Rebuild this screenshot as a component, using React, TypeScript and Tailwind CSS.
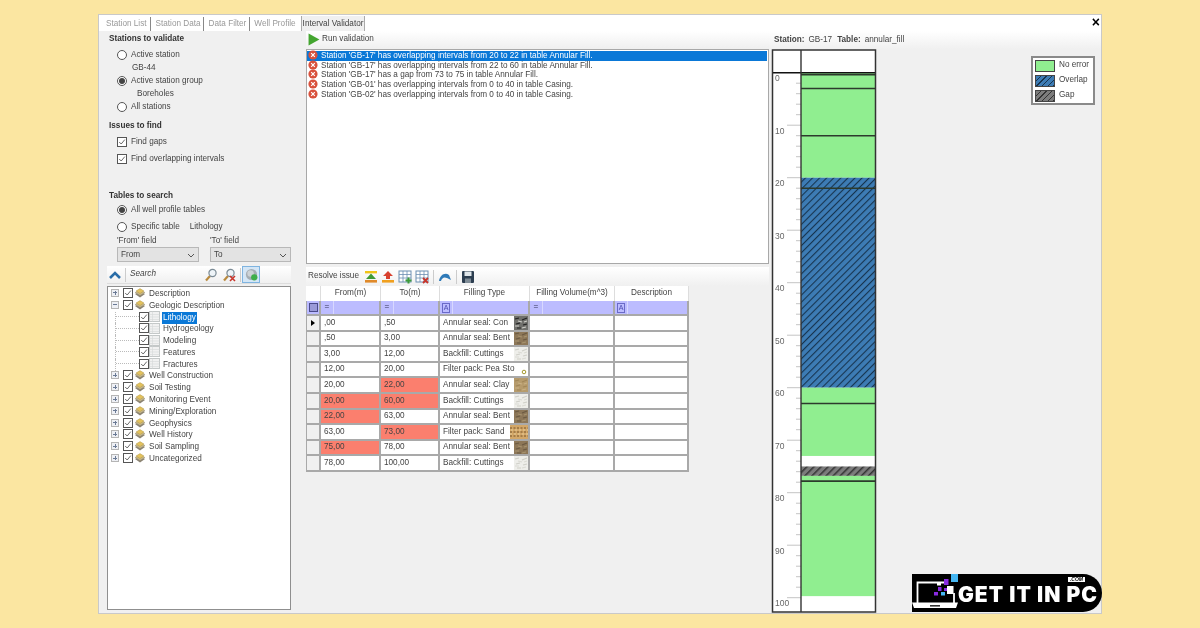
import type { ReactNode } from "react";

const grid = [
  { from: ",00", to: ",50", type: "Annular seal: Con", tex: "con", arrow: true },
  { from: ",50", to: "3,00", type: "Annular seal: Bent", tex: "bent" },
  { from: "3,00", to: "12,00", type: "Backfill: Cuttings", tex: "cut" },
  { from: "12,00", to: "20,00", type: "Filter pack: Pea Sto", tex: "pea" },
  { from: "20,00", to: "22,00", type: "Annular seal: Clay", tex: "clay", badTo: true },
  { from: "20,00", to: "60,00", type: "Backfill: Cuttings", tex: "cut", badFrom: true, badTo: true },
  { from: "22,00", to: "63,00", type: "Annular seal: Bent", tex: "bent", badFrom: true },
  { from: "63,00", to: "73,00", type: "Filter pack: Sand", tex: "sand", badTo: true },
  { from: "75,00", to: "78,00", type: "Annular seal: Bent", tex: "bent", badFrom: true },
  { from: "78,00", to: "100,00", type: "Backfill: Cuttings", tex: "cut" },
];

const messages = [
  "Station 'GB-17' has overlapping intervals from 20 to 22 in table Annular Fill.",
  "Station 'GB-17' has overlapping intervals from 22 to 60 in table Annular Fill.",
  "Station 'GB-17' has a gap from 73 to 75 in table Annular Fill.",
  "Station 'GB-01' has overlapping intervals from 0 to 40 in table Casing.",
  "Station 'GB-02' has overlapping intervals from 0 to 40 in table Casing.",
];

const treeAfter = [
  "Well Construction",
  "Soil Testing",
  "Monitoring Event",
  "Mining/Exploration",
  "Geophysics",
  "Well History",
  "Soil Sampling",
  "Uncategorized",
];

function Radio({ on }: { on?: boolean }) {
  return (
    <span className="mb-[2px] flex h-[10px] w-[10px] shrink-0 items-center justify-center rounded-full border border-[#555] bg-white">
      {on && <span className="h-[6px] w-[6px] rounded-full bg-[#444]" />}
    </span>
  );
}

function Check() {
  return (
    <span className="mb-[2px] flex h-[10px] w-[10px] shrink-0 items-center justify-center border border-[#555] bg-white">
      <svg viewBox="0 0 10 10" className="h-full w-full">
        <path d="M1.5 5 L4 7.5 L8.5 2" fill="none" stroke="#444" strokeWidth="1" />
      </svg>
    </span>
  );
}

function Expander({ open }: { open?: boolean }) {
  return (
    <span className="relative mb-[2px] flex h-[8px] w-[8px] shrink-0 items-center justify-center border border-[#b5b5b5] bg-[#eef0f5]">
      <span className="h-px w-[4px] bg-[#6a7a95]" />
      {!open && <span className="absolute h-[4px] w-px bg-[#6a7a95]" />}
    </span>
  );
}

function Stack() {
  return (
    <svg viewBox="0 0 12 10" className="mb-[2px] h-[10px] w-[12px] shrink-0">
      <path d="M1 6 L6 3.5 L11 6 L6 9.5 Z" fill="#8b8372" />
      <path d="M1 4.5 L6 2 L11 4.5 L6 7.5 Z" fill="#c9b98a" stroke="#8b8372" strokeWidth=".4" />
      <path d="M2 3 L6 .6 L10 3 L6 5.5 Z" fill="#e3c25e" stroke="#a98d3c" strokeWidth=".4" />
    </svg>
  );
}

function TableIcon() {
  return (
    <svg viewBox="0 0 11 11" className="mb-[2px] h-[11px] w-[11px] shrink-0">
      <rect x=".5" y=".5" width="10" height="10" fill="#f1f1f1" stroke="#c4c8c8" />
      <path d="M.5 3.5 H10.5 M.5 6 H10.5 M.5 8.5 H10.5 M3.5 .5 V10.5" stroke="#d5d8d8" strokeWidth=".6" />
    </svg>
  );
}

function ErrorDot() {
  return (
    <svg viewBox="0 0 10 10" className="mb-[1px] h-[10px] w-[10px] shrink-0">
      <circle cx="5" cy="5" r="4.6" fill="#d9513c" />
      <path d="M3.2 3.2 L6.8 6.8 M6.8 3.2 L3.2 6.8" stroke="#fff" strokeWidth="1.2" />
    </svg>
  );
}

function Option({ on, radio = true, children }: { on?: boolean; radio?: boolean; children: ReactNode }) {
  return (
    <div className="flex h-[13px] items-center gap-[4px] pl-[18px]">
      {radio ? <Radio on={on} /> : <Check />}
      <span>{children}</span>
    </div>
  );
}

function Heading({ children }: { children: ReactNode }) {
  return <div className="flex h-[13px] items-center pl-[10px] font-bold text-[#333]">{children}</div>;
}

function Select({ label, w }: { label: string; w: string }) {
  return (
    <div className={`flex h-[15px] items-center justify-between border border-[#b8b8b8] bg-[#e3e3e3] pt-[2px] pr-[3px] pl-[3px] ${w}`}>
      <span>{label}</span>
      <svg viewBox="0 0 8 5" className="h-[5px] w-[8px]">
        <path d="M1 1 L4 4 L7 1" fill="none" stroke="#555" />
      </svg>
    </div>
  );
}

function Magnifier({ cross }: { cross?: boolean }) {
  return (
    <svg viewBox="0 0 14 14" className="h-[14px] w-[14px] shrink-0">
      <path d="M6 8 L2 12.5" stroke="#b98a3e" strokeWidth="2.2" />
      <circle cx="8.5" cy="5" r="3.6" fill="#eef4f8" stroke="#7b8b95" strokeWidth="1.2" />
      {cross && <path d="M8 8 L13 13 M13 8 L8 13" stroke="#c8352b" strokeWidth="1.6" />}
    </svg>
  );
}

function StationTree() {
  return (
    <div className="mt-[2px] mr-[15px] ml-[8px] min-h-0 flex-1 border border-[#8f8f8f] bg-white pt-[1px]">
      <TreeRoot label="Description" />
      <TreeRoot label="Geologic Description" open />
      <TreeLeaf label="Lithology" selected />
      <TreeLeaf label="Hydrogeology" />
      <TreeLeaf label="Modeling" />
      <TreeLeaf label="Features" />
      <TreeLeaf label="Fractures" />
      {treeAfter.map((t) => (
        <TreeRoot key={t} label={t} />
      ))}
    </div>
  );
}

function TreeRoot({ label, open }: { label: string; open?: boolean }) {
  return (
    <div className="flex h-[11.8px] items-center pl-[3px]">
      <Expander open={open} />
      <span className="ml-[4px] flex items-center">
        <Check />
      </span>
      <span className="ml-px flex items-center">
        <Stack />
      </span>
      <span className="ml-[3px]">{label}</span>
    </div>
  );
}

function TreeLeaf({ label, selected }: { label: string; selected?: boolean }) {
  return (
    <div className="ml-[7px] flex h-[11.8px] items-center border-l border-dotted border-[#bbb]">
      <span className="mb-[2px] w-[23px] border-t border-dotted border-[#bbb]" />
      <Check />
      <TableIcon />
      <span className={`ml-[2px] px-px leading-[12px] ${selected ? "bg-[#0a78d7] text-white" : ""}`}>{label}</span>
    </div>
  );
}

function LeftPanel() {
  return (
    <div className="flex h-full w-[207px] shrink-0 flex-col pt-[1px]">
      <div className="pt-[1px]">
        <Heading>Stations to validate</Heading>
      </div>
      <div className="mt-[3px]">
        <Option>Active station</Option>
      </div>
      <div className="flex h-[13px] items-center pl-[33px]">GB-44</div>
      <Option on>Active station group</Option>
      <div className="flex h-[13px] items-center pl-[38px]">Boreholes</div>
      <Option>All stations</Option>
      <div className="mt-[6px]">
        <Heading>Issues to find</Heading>
      </div>
      <div className="mt-[3px]">
        <Option radio={false}>Find gaps</Option>
      </div>
      <div className="mt-[4px]">
        <Option radio={false}>Find overlapping intervals</Option>
      </div>
      <div className="mt-[24px]">
        <Heading>Tables to search</Heading>
      </div>
      <div className="mt-[1px]">
        <Option on>All well profile tables</Option>
      </div>
      <div className="mt-[4px] flex items-center">
        <Option>Specific table</Option>
        <span className="ml-[10px]">Lithology</span>
      </div>
      <div className="mt-[2px] flex h-[11px] items-center pl-[18px]">
        <span className="w-[93px]">'From' field</span>
        <span>'To' field</span>
      </div>
      <div className="flex gap-[11px] pl-[18px]">
        <Select label="From" w="w-[82px]" />
        <Select label="To" w="w-[81px]" />
      </div>
      <div className="mt-[4px] mr-[15px] ml-[8px] flex h-[18px] items-center border-b border-[#ddd] bg-gradient-to-b from-white to-[#f0f0f0] pl-[2px]">
        <svg viewBox="0 0 12 8" className="h-[8px] w-[12px] shrink-0">
          <path d="M1 7 L6 2 L11 7" fill="none" stroke="#2a6da8" strokeWidth="2.6" />
        </svg>
        <span className="ml-[4px] h-[14px] w-px bg-[#ccc]" />
        <span className="ml-[4px] w-[74px] italic">Search</span>
        <Magnifier />
        <span className="ml-[4px] flex items-center">
          <Magnifier cross />
        </span>
        <span className="ml-[4px] h-[14px] w-px bg-[#ccc]" />
        <span className="ml-[1px] flex h-[17px] w-[18px] items-center justify-center border border-[#7fb4e0] bg-[#d4e6f6]">
          <svg viewBox="0 0 14 14" className="h-[13px] w-[13px]">
            <circle cx="7" cy="7" r="6" fill="#a5adb3" />
            <circle cx="6" cy="6" r="3.5" fill="#cdd2d6" />
            <circle cx="10" cy="10" r="3.4" fill="#3fae49" />
          </svg>
        </span>
      </div>
      <StationTree />
      <div className="h-[3px]" />
    </div>
  );
}

function Toolbar({ children, className = "" }: { children: ReactNode; className?: string }) {
  return (
    <div className={`flex items-center bg-gradient-to-b from-white to-[#f0f0f0] ${className}`}>{children}</div>
  );
}

function ResolveIcons() {
  return (
    <div className="ml-[5px] flex items-center gap-[3px]">
      <svg viewBox="0 0 14 14" className="h-[14px] w-[14px]">
        <rect x="1" y="1" width="12" height="2.4" fill="#f0c419" />
        <path d="M7 3.5 L12 9 H2 Z" fill="#3f9a36" />
        <rect x="1" y="10" width="12" height="2.6" fill="#e08a2a" />
      </svg>
      <svg viewBox="0 0 14 14" className="h-[14px] w-[14px]">
        <path d="M7 1 L12 6 H9 V9 H5 V6 H2 Z" fill="#d8402e" />
        <rect x="1" y="10" width="12" height="2.6" fill="#f0a01f" />
      </svg>
      <svg viewBox="0 0 14 14" className="h-[14px] w-[14px]">
        <rect x="1" y="1" width="12" height="11" fill="#fff" stroke="#6d8fb2" />
        <path d="M1 4.5 H13 M1 8 H13 M5 1 V12 M9 1 V12" stroke="#6d8fb2" strokeWidth=".8" />
        <path d="M10.5 7.5 V13.5 M7.5 10.5 H13.5" stroke="#3d9c3a" strokeWidth="2" />
      </svg>
      <svg viewBox="0 0 14 14" className="h-[14px] w-[14px]">
        <rect x="1" y="1" width="12" height="11" fill="#fff" stroke="#6d8fb2" />
        <path d="M1 4.5 H13 M1 8 H13 M5 1 V12 M9 1 V12" stroke="#6d8fb2" strokeWidth=".8" />
        <path d="M8 8 L13 13 M13 8 L8 13" stroke="#c8352b" strokeWidth="1.8" />
      </svg>
      <span className="mx-px h-[14px] w-px bg-[#ccc]" />
      <svg viewBox="0 0 14 14" className="h-[14px] w-[14px]">
        <path d="M1 11 C2 5 7 2 11 5 L13 10 L9 8 C6 6.5 4 8 3 11 Z" fill="#2f7ab8" />
      </svg>
      <span className="mx-px h-[14px] w-px bg-[#ccc]" />
      <svg viewBox="0 0 14 14" className="h-[14px] w-[14px]">
        <rect x="1" y="1" width="12" height="12" rx="1" fill="#2c3e50" />
        <rect x="3.5" y="1.5" width="7" height="4.5" fill="#dfe6ea" />
        <rect x="4" y="8.5" width="6" height="4.5" fill="#7f8c96" />
      </svg>
    </div>
  );
}

function Texture({ kind }: { kind: string }) {
  if (kind === "pea") {
    return (
      <svg viewBox="0 0 14 14" className="h-[14px] w-[14px] shrink-0">
        <circle cx="10" cy="9" r="1.8" fill="none" stroke="#a3982d" strokeWidth="1" />
      </svg>
    );
  }
  const styles: Record<string, [string, string, string]> = {
    con: ["#6f6f6b", "#222", "#cfcfc9"],
    bent: ["#8d7758", "#6b5a42", "#a8946f"],
    cut: ["#eeeeea", "#cfcfc8", "#dadad3"],
    clay: ["#b69b6c", "#a08658", "#c9b184"],
  };
  if (kind === "sand") {
    return (
      <svg viewBox="0 0 18 14" className="h-[14px] w-[18px] shrink-0">
        <rect width="18" height="14" fill="#d3a768" />
        <path d="M0 3 H18 M0 7 H18 M0 11 H18" stroke="#6b4a22" strokeWidth=".9" strokeDasharray="2 1.5" />
        <path d="M1 5 H18 M0 9 H18" stroke="#eed6a6" strokeWidth=".8" strokeDasharray="2 2" />
      </svg>
    );
  }
  const [bg, dark, light] = styles[kind];
  return (
    <svg viewBox="0 0 14 14" className="h-[14px] w-[14px] shrink-0">
      <rect width="14" height="14" fill={bg} />
      <path d="M1 3 L5 2 M8 4 L13 2 M2 8 L6 7 M9 9 L13 8 M3 12 L7 12" stroke={dark} strokeWidth="1.2" />
      <path d="M4 5 L8 6 M10 6 L13 5 M1 10 L5 10 M8 12 L12 11" stroke={light} strokeWidth="1.1" />
    </svg>
  );
}

const cell = "flex items-center overflow-hidden border-r-2 border-b-2 border-[#a9a9a9] pl-[3px]";

function FilterCell({ text }: { text: boolean }) {
  return (
    <div className="flex items-center border-r-2 border-b-2 border-[#a9a9a9] bg-[#bcbcff]">
      <span className="flex h-full w-[13px] items-center justify-center border-r border-[#d8d8ff] text-[#335]">
        {text ? (
          <span className="border border-[#6a6ac8] px-[1px] text-[7px] leading-[8px] text-[#4a4ab0]">A</span>
        ) : (
          "="
        )}
      </span>
    </div>
  );
}

function IssueGrid() {
  return (
    <div className="grid w-[383px] grid-cols-[15px_60px_59px_90px_85px_74px] grid-rows-[15px_15px_repeat(10,15.6px)] bg-white">
      <div className="border-r border-[#ddd]" />
      {["From(m)", "To(m)", "Filling Type", "Filling Volume(m^3)", "Description"].map((h) => (
        <div key={h} className="flex items-center justify-center border-r border-[#ddd]">
          {h}
        </div>
      ))}
      <div className="flex items-center justify-center border-r-2 border-b-2 border-l border-[#a9a9a9] bg-[#bcbcff]">
        <span className="h-[9px] w-[9px] border border-[#4a4a8a] bg-[#9a9ad8]" />
      </div>
      <FilterCell text={false} />
      <FilterCell text={false} />
      <FilterCell text />
      <FilterCell text={false} />
      <FilterCell text />
      {grid.map((r, i) => (
        <div key={i} className="contents">
          <div className="flex items-center justify-center border-r-2 border-b-2 border-l border-[#a9a9a9] bg-[#f0f0f0]">
            {r.arrow && <span className="h-0 w-0 border-y-[3px] border-l-[4px] border-y-transparent border-l-black" />}
          </div>
          <div className={`${cell} ${r.badFrom ? "bg-[#fb7f6e]" : ""}`}>{r.from}</div>
          <div className={`${cell} ${r.badTo ? "bg-[#fb7f6e]" : ""}`}>{r.to}</div>
          <div className={`${cell} justify-between pl-[2px]`}>
            <span className="whitespace-nowrap">{r.type}</span>
            <Texture kind={r.tex} />
          </div>
          <div className={cell} />
          <div className={cell} />
        </div>
      ))}
    </div>
  );
}

function MiddlePanel() {
  return (
    <div className="flex h-full w-[463px] shrink-0 flex-col">
      <Toolbar className="h-[17px] pl-[2px]">
        <svg viewBox="0 0 11 12" className="h-[13px] w-[12px]">
          <path d="M.5 .5 L10.5 6 L.5 11.5 Z" fill="#43a52f" />
        </svg>
        <span className="ml-[2px]">Run validation</span>
      </Toolbar>
      <div className="mt-[1px] h-[215px] border border-[#a8a8a8] bg-white pt-px">
        {messages.map((m, i) => (
          <div key={m} className={`flex h-[9.6px] items-center gap-[3px] pl-px ${i === 0 ? "mr-px bg-[#0a78d7]" : ""}`}>
            <ErrorDot />
            <span className={`leading-[9px] ${i === 0 ? "text-white" : ""}`}>{m}</span>
          </div>
        ))}
      </div>
      <Toolbar className="mt-[3px] h-[19px] pl-[2px]">
        <span>Resolve issue</span>
        <ResolveIcons />
      </Toolbar>
      <IssueGrid />
    </div>
  );
}

function Column() {
  const y = (d: number) => 23.7 + d * 5.25;
  const ticks = Array.from({ length: 51 }, (_, i) => i * 2);
  return (
    <svg viewBox="0 0 106 564" className="h-[564px] w-[106px] shrink-0">
      <defs>
        <pattern id="over" width="5" height="5" patternUnits="userSpaceOnUse" patternTransform="rotate(45)">
          <rect width="5" height="5" fill="#3d7cb5" />
          <rect width="1.1" height="5" fill="#17344f" />
        </pattern>
        <pattern id="gap" width="5" height="5" patternUnits="userSpaceOnUse" patternTransform="rotate(45)">
          <rect width="5" height="5" fill="#7c7c7c" />
          <rect width="1.5" height="5" fill="#333" />
        </pattern>
      </defs>
      <rect x="1.5" y="1" width="103" height="562" fill="#fff" />
      {/* filled intervals */}
      <rect x="30" y={y(0)} width="74" height={y(20) - y(0)} fill="#90ee90" />
      <rect x="30" y={y(20)} width="74" height={y(60) - y(20)} fill="url(#over)" />
      <rect x="30" y={y(60)} width="74" height={y(73) - y(60)} fill="#90ee90" />
      <rect x="30" y={y(75)} width="74" height={y(76.8) - y(75)} fill="url(#gap)" />
      <rect x="30" y={y(76.8)} width="74" height={y(99.7) - y(76.8)} fill="#90ee90" />
      {/* interval lines */}
      {[0.4, 3, 12, 22, 63, 77.8].map((d) => (
        <line key={d} x1="30" x2="104" y1={y(d)} y2={y(d)} stroke="#2c3a2c" strokeWidth="1.6" />
      ))}
      {ticks.map((d) =>
        d % 10 === 0 ? (
          <g key={d}>
            {d > 0 && <line x1="16" x2="30" y1={y(d)} y2={y(d)} stroke="#c4c4c4" />}
            <text x="4" y={y(d) + 8.5} fontSize="8.5" fill="#666" fontFamily="'Liberation Sans', sans-serif">
              {d}
            </text>
          </g>
        ) : (
          <line key={d} x1="25" x2="30" y1={y(d)} y2={y(d)} stroke="#c4c4c4" />
        ),
      )}
      <line x1="1.5" x2="104.5" y1={y(0)} y2={y(0)} stroke="#111" strokeWidth="1.4" />
      <line x1="30" x2="30" y1="1" y2="563" stroke="#333" strokeWidth="1.4" />
      <rect x="1.5" y="1" width="103" height="562" fill="none" stroke="#333" strokeWidth="1.5" />
    </svg>
  );
}

function Legend() {
  const items = [
    { label: "No error", fill: "bg-[#90ee90]" },
    { label: "Overlap", fill: "bg-[repeating-linear-gradient(135deg,#3d7cb5_0_3px,#17344f_3px_4px)]" },
    { label: "Gap", fill: "bg-[repeating-linear-gradient(135deg,#7c7c7c_0_3px,#333_3px_4px)]" },
  ];
  return (
    <div className="mt-[7px] mr-[6px] ml-auto flex h-[49px] w-[64px] flex-col justify-center gap-[3px] border-2 border-[#8a8a8a] bg-white pl-[2px]">
      {items.map((it) => (
        <div key={it.label} className="flex h-[12px] items-center gap-[4px]">
          <span className={`h-[12px] w-[20px] border border-[#444] ${it.fill}`} />
          <span>{it.label}</span>
        </div>
      ))}
    </div>
  );
}

function RightPanel() {
  return (
    <div className="flex h-full min-w-0 flex-1 flex-col">
      <Toolbar className="h-[18px] shrink-0 gap-[4px] pl-[5px]">
        <span className="font-bold">Station:</span>
        <span>GB-17</span>
        <span className="ml-px font-bold">Table:</span>
        <span>annular_fill</span>
      </Toolbar>
      <div className="flex min-h-0 flex-1 pl-[2px]">
        <Column />
        <Legend />
      </div>
    </div>
  );
}

function Badge() {
  return (
    <div className="absolute right-[-1px] bottom-[1px] flex h-[38px] w-[190px] items-center rounded-r-[19px] bg-black">
      <svg viewBox="0 0 47 38" className="h-[38px] w-[47px] shrink-0">
        <path d="M5.5 29 V8.5 H33" fill="none" stroke="#fff" strokeWidth="1.8" />
        <path d="M42 19 V29" fill="none" stroke="#fff" strokeWidth="1.8" />
        <path d="M0 28.5 H46 L44 34 H2 Z" fill="#fff" />
        <rect x="18" y="31" width="10" height="1.6" fill="#333" />
        <rect x="39" y="0" width="7" height="8" fill="#45b6f2" />
        <rect x="32" y="5" width="4.5" height="6" fill="#8a2be2" />
        <rect x="25" y="8" width="4" height="3.5" fill="#fff" />
        <rect x="26" y="13" width="3.5" height="4" fill="#8a2be2" />
        <rect x="35" y="12" width="6.5" height="8" fill="#fff" />
        <rect x="22" y="18" width="4" height="3.5" fill="#8a2be2" />
        <rect x="29" y="18" width="4" height="3.5" fill="#45b6f2" />
        <rect x="32" y="14" width="3" height="3" fill="#8a2be2" />
      </svg>
      <span className="ml-[-1px] pt-[3px] font-['Inter',sans-serif] text-[21px] leading-none font-black tracking-[1px] whitespace-nowrap text-white">
        GET IT IN PC
      </span>
      <span className="absolute top-[3px] right-[17px] bg-white px-[2px] text-[5px] leading-[5px] font-bold text-black italic">
        .COM
      </span>
    </div>
  );
}

export default function App() {
  return (
    <div className="h-[628px] w-[1200px] overflow-hidden bg-[#fbe6a1] pt-[14px] pl-[98px] font-['Liberation_Sans',Arial,sans-serif] text-[8.2px] text-[#444]">
      <div className="relative flex h-[600px] w-[1004px] flex-col border border-[#c9c9c9] bg-[#f0f0f0] blur-[0.3px]">
        {/* Tab strip */}
        <div className="flex h-[16px] shrink-0 items-end bg-white pl-[7px] text-[#999]">
          <span className="h-[14px] border-r border-[#888] pr-[3px] leading-[14px]">Station List</span>
          <span className="ml-[5px] h-[14px] border-r border-[#888] pr-[2px] leading-[14px]">Station Data</span>
          <span className="ml-[5px] h-[14px] border-r border-[#888] pr-[3px] leading-[14px]">Data Filter</span>
          <span className="ml-[4px] h-[14px] leading-[14px]">Well Profile</span>
          <span className="ml-[5px] h-[15px] border-x border-[#aaa] bg-[#f0f0f0] px-px leading-[15px] text-[#444]">
            Interval Validator
          </span>
          <span className="mr-[1px] mb-[2px] ml-auto self-center text-[14px] leading-none font-bold text-black">×</span>
        </div>
        <div className="flex min-h-0 flex-1">
          <LeftPanel />
          <MiddlePanel />
          <RightPanel />
        </div>
        <Badge />
      </div>
    </div>
  );
}
